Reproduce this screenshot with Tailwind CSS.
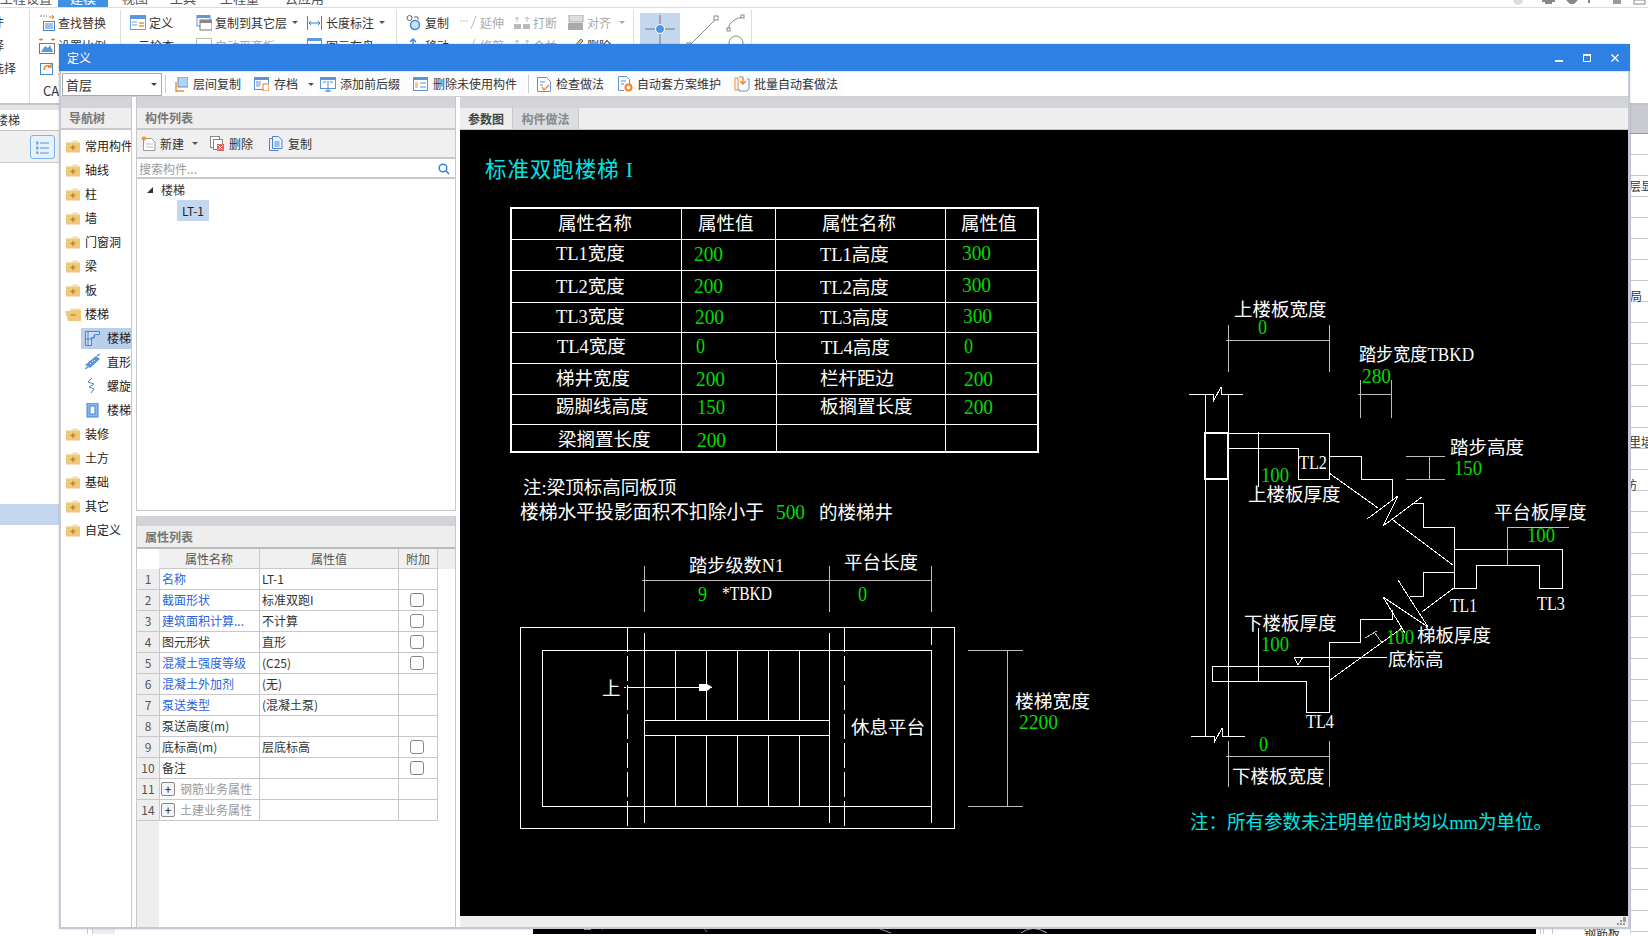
<!DOCTYPE html>
<html lang="zh">
<head>
<meta charset="UTF-8">
<title>定义</title>
<script src="https://cdn.jsdelivr.net/npm/@tailwindcss/browser@4"></script>
</head>
<body class="bg-white">
<svg width="0" height="0" class="absolute">
  <symbol id="folder" viewBox="0 0 14 14">
    <path d="M6 1.500h6v2H6z" fill="#f3dcae"/>
    <path d="M0 3.500h14v10H0z" fill="#efc878"/>
    <path d="M7 6v5M4.500 8.500h5" stroke="#b98a2e" stroke-width="1.400"/>
  </symbol>
  <symbol id="folder-open" viewBox="0 0 16 14">
    <path d="M5 1.500h10v2H5z" fill="#f3dcae"/>
    <path d="M0 4h5l1-1h10v11H3z" fill="#efc878"/>
    <path d="M5.500 8h5" stroke="#b98a2e" stroke-width="1.400"/>
  </symbol>
</svg>

<div class="relative w-[1648px] h-[936px] overflow-hidden bg-white text-[12px] leading-none text-[#333] font-['Noto_Sans_CJK_SC','Liberation_Sans',sans-serif]">

  <!-- 主窗口 菜单 -->
  <div class="h-[8px] flex items-end overflow-hidden border-b border-[#ddd] text-[13px] text-[#555]">
    <span class="w-[58px] shrink-0 h-[16px]">工程设置</span>
    <span class="w-[50px] shrink-0 h-[16px] bg-[#3f8fe4] text-white text-center">建模</span>
    <span class="ml-[14px] w-[48px] shrink-0 h-[16px]">视图</span>
    <span class="w-[50px] shrink-0 h-[16px]">工具</span>
    <span class="w-[65px] shrink-0 h-[16px]">工程量</span>
    <span class="h-[16px] shrink-0">云应用</span>
  </div>

  <!-- ribbon -->
  <div class="h-[97px] flex pt-[2px] border-b-2 border-[#c4c4c4] bg-white">
    <div class="w-[29px] shrink-0 flex flex-col overflow-hidden">
      <div class="h-[12px] mt-[6px] flex justify-end pr-[25px] whitespace-nowrap"><span>文件</span></div>
      <div class="h-[12px] mt-[11px] flex justify-end pr-[25px] whitespace-nowrap"><span>选择</span></div>
      <div class="h-[12px] mt-[11px] flex justify-end pr-[13px] whitespace-nowrap"><span>批量选择</span></div>
    </div>
    <div class="w-[91px] shrink-0 border-l border-[#ddd] pl-[9px] flex flex-col">
      <div class="h-[23px] mt-[1px] flex items-center gap-[3px] text-[12px]">
        <svg width="16" height="16" viewBox="0 0 16 16"><path d="M1 1h7" stroke="#888" stroke-dasharray="2 1"/><path d="M10 2h5M13 0l2 2-2 2" stroke="#e77b1e" fill="none"/><rect x="4.500" y="6.500" width="11" height="9" fill="none" stroke="#4a86cf"/><path d="M6 9h8M6 11h8M6 13h8" stroke="#4a86cf"/></svg>
        <span>查找替换</span>
      </div>
      <div class="h-[23px] flex items-center gap-[3px]">
        <svg width="16" height="16" viewBox="0 0 16 16"><path d="M2 0v3M0 1.500h4M14 0v3M12 1.500h4" stroke="#e77b1e"/><rect x=".5" y="5.500" width="15" height="10" fill="none" stroke="#777"/><path d="M2 14l4-6 3 2 2-3 3 7z" fill="#5d98dd"/></svg>
        <span>设置比例</span>
      </div>
      <div class="h-[23px] flex items-center gap-[3px]">
        <svg width="16" height="16" viewBox="0 0 16 16"><rect x="1.500" y="2.500" width="12" height="11" fill="none" stroke="#4a86cf"/><path d="M5 9a4 4 0 0 1 7-3M12 3v3H9" stroke="#e77b1e" fill="none" stroke-width="1.300"/></svg>
        <span>还原</span>
      </div>
      <div class="h-[20px] pl-[4px] flex items-center text-[13px]">CAD操作</div>
    </div>
    <div class="w-[276px] shrink-0 border-l border-[#ddd] pl-[9px] flex">
      <div class="flex flex-col w-[44px] shrink-0">
        <div class="h-[23px] mt-[1px] flex items-center gap-[3px]">
          <svg width="16" height="15" viewBox="0 0 16 15"><rect x=".5" y=".5" width="15" height="14" fill="#fff" stroke="#6b9fdc"/><rect x="0" y="0" width="16" height="4" fill="#5d98dd"/><path d="M2 7h5M2 10h5" stroke="#6b9fdc"/><path d="M9 7h5v2H9zM9 10h5v2H9z" fill="#f0b35c"/></svg>
          <span>定义</span>
        </div>
        <div class="h-[23px] flex items-center gap-[3px] whitespace-nowrap">
          <svg width="16" height="15" viewBox="0 0 16 15"><circle cx="7" cy="8" r="4" fill="none" stroke="#6b9fdc"/><path d="M10 11l3 3" stroke="#6b9fdc"/></svg>
          <span>云检查</span>
        </div>
      </div>
      <div class="flex flex-col w-[102px] ml-[22px] shrink-0">
        <div class="h-[23px] mt-[1px] flex items-center whitespace-nowrap">
          <svg width="16" height="16" viewBox="0 0 16 16" class="mr-[3px] shrink-0"><rect x="1" y="0" width="13" height="11" fill="#fff" stroke="#5d98dd"/><rect x="1" y="0" width="13" height="3" fill="#5d98dd"/><rect x="4" y="5" width="12" height="10" fill="#fff" stroke="#777"/><rect x="4" y="5" width="12" height="3" fill="#888"/></svg>
          <span>复制到其它层</span>
          <span class="ml-[5px] border-x-[3px] border-t-[3px] border-x-transparent border-t-[#555]"></span>
        </div>
        <div class="h-[23px] flex items-center gap-[3px] whitespace-nowrap text-[#aaa]">
          <svg width="16" height="15" viewBox="0 0 16 15"><rect x=".5" y=".5" width="15" height="13" fill="none" stroke="#bbb"/></svg>
          <span>自动平齐板</span>
        </div>
      </div>
      <div class="flex flex-col ml-[9px] shrink-0">
        <div class="h-[23px] mt-[1px] flex items-center whitespace-nowrap">
          <svg width="15" height="16" viewBox="0 0 15 16" class="mr-[4px] shrink-0"><path d="M.5 1v14M14.500 1v14" stroke="#777"/><path d="M2 8h11M4 6L2 8l2 2M11 6l2 2-2 2" stroke="#2f7fd6" fill="none"/></svg>
          <span>长度标注</span>
          <span class="ml-[5px] border-x-[3px] border-t-[3px] border-x-transparent border-t-[#555]"></span>
        </div>
        <div class="h-[23px] flex items-center gap-[4px] whitespace-nowrap">
          <svg width="15" height="15" viewBox="0 0 15 15"><rect x=".5" y=".5" width="14" height="12" fill="none" stroke="#5d98dd"/><rect x="0" y="0" width="15" height="3" fill="#5d98dd"/></svg>
          <span>图元存盘</span>
        </div>
      </div>
    </div>
    <div class="w-[237px] shrink-0 border-l border-[#ddd] pl-[9px] flex gap-[10px]">
      <div class="flex flex-col w-[44px] shrink-0">
        <div class="h-[23px] mt-[1px] flex items-center gap-[3px]">
          <svg width="16" height="16" viewBox="0 0 16 16"><circle cx="3.500" cy="3" r="2.500" fill="none" stroke="#666"/><circle cx="9" cy="10" r="4.500" fill="#cfe1f7" stroke="#3f86d8" stroke-width="1.500"/><path d="M8 2h4v3" stroke="#666" fill="none"/></svg>
          <span>复制</span>
        </div>
        <div class="h-[23px] flex items-center gap-[3px]">
          <svg width="16" height="15" viewBox="0 0 16 15"><path d="M7 1v9M4 4l3-3 3 3" stroke="#3f86d8" fill="none" stroke-width="1.400"/></svg>
          <span>移动</span>
        </div>
      </div>
      <div class="flex flex-col w-[44px] shrink-0 text-[#aaa]">
        <div class="h-[23px] mt-[1px] flex items-center gap-[2px] whitespace-nowrap">
          <svg width="18" height="14" viewBox="0 0 18 14"><path d="M0 5h8" stroke="#bbb" stroke-dasharray="2 1"/><path d="M16 0L11 13" stroke="#bbb"/></svg>
          <span>延伸</span>
        </div>
        <div class="h-[23px] flex items-center gap-[2px] whitespace-nowrap">
          <svg width="18" height="14" viewBox="0 0 18 14"><path d="M15 0L10 13" stroke="#bbb"/></svg>
          <span>修剪</span>
        </div>
      </div>
      <div class="flex flex-col w-[44px] shrink-0 text-[#aaa]">
        <div class="h-[23px] mt-[1px] flex items-center gap-[3px]">
          <svg width="16" height="14" viewBox="0 0 16 14"><path d="M0 8h7v5H0zM9 8h7v5H9z" fill="#bbb"/><path d="M3 1v5M13 1v5M1 3l2-2 2 2M11 3l2-2 2 2" stroke="#bbb" fill="none"/></svg>
          <span>打断</span>
        </div>
        <div class="h-[23px] flex items-center gap-[3px]">
          <svg width="16" height="14" viewBox="0 0 16 14"><path d="M3 1v5M13 1v5M1 3l2-2 2 2M11 3l2-2 2 2" stroke="#bbb" fill="none"/></svg>
          <span>合并</span>
        </div>
      </div>
      <div class="flex flex-col shrink-0">
        <div class="h-[23px] mt-[1px] flex items-center gap-[3px] text-[#aaa]">
          <svg width="16" height="15" viewBox="0 0 16 15"><path d="M1 0h14v7H1z" fill="#ddd" stroke="#aaa"/><path d="M0 8h15v7H0z" fill="#aaa"/></svg>
          <span>对齐</span>
          <span class="ml-[5px] border-x-[3px] border-t-[3px] border-x-transparent border-t-[#aaa]"></span>
        </div>
        <div class="h-[23px] flex items-center gap-[3px]">
          <svg width="16" height="15" viewBox="0 0 16 15"><path d="M13 1L4 11l-2 3 3-1 10-10z" fill="#e2c98d" stroke="#7c6a3c"/></svg>
          <span>删除</span>
        </div>
      </div>
    </div>
    <div class="w-[119px] shrink-0 border-x border-[#ddd] pl-[6px] flex gap-[6px]">
      <div class="w-[40px] h-[32px] mt-[3px] bg-[#c5d7ee]">
        <svg width="40" height="32" viewBox="0 0 40 32"><path d="M5 16h30M20 2v30" stroke="#777"/><circle cx="20" cy="16" r="4.500" fill="#4f97e6" stroke="#fff"/></svg>
      </div>
      <svg width="34" height="34" viewBox="0 0 34 34" class="mt-[4px]"><path d="M3 32L30 5" stroke="#888"/><rect x="1" y="29" width="4" height="4" fill="#fff" stroke="#888"/><rect x="28" y="2" width="4" height="4" fill="#fff" stroke="#888"/></svg>
      <svg width="22" height="34" viewBox="0 0 22 34" class="mt-[4px]"><path d="M2 15Q4 5 17 3" stroke="#888" fill="none"/><rect x="1" y="14" width="3" height="3" fill="#fff" stroke="#888"/><rect x="15" y="1" width="3" height="3" fill="#fff" stroke="#888"/><circle cx="10" cy="29" r="7" fill="none" stroke="#888"/></svg>
    </div>
    <div class="flex-1 relative">
      <svg width="140" height="6" viewBox="0 0 140 6" class="absolute right-0 -top-[10px]"><circle cx="10" cy="0" r="5" fill="#ddd"/><path d="M34 1h13M37 3h7" stroke="#888" stroke-width="2"/><path d="M58 0h12l-4 4h-4z" fill="#888"/><rect x="80" y="0" width="2" height="3" fill="#888"/><rect x="105" y="0" width="8" height="4" fill="#999"/><rect x="126" y="0" width="11" height="4" fill="none" stroke="#888"/></svg>
    </div>
  </div>

  <!-- 主窗口 主体 -->
  <div class="h-[829px] flex">
    <div class="w-[59px] shrink-0 flex flex-col">
      <div class="h-[5px] bg-[#e4e4e4]"></div>
      <div class="h-[21px] flex items-center justify-end overflow-hidden border-b border-[#c4c4c4] pr-[39px] whitespace-nowrap"><span>楼梯</span></div>
      <div class="h-[32px] bg-[#f0f0f0] border-b border-[#c8c8c8] pl-[30px] pt-[4px]">
        <div class="w-[25px] h-[24px] rounded-[3px] border border-[#7fb2e8] bg-[#e6f1fc] flex items-center justify-center">
          <svg width="13" height="13" viewBox="0 0 13 13"><path d="M0 1h2v2H0zM0 6h2v2H0zM0 11h2v2H0zM4 2h9M4 7h9M4 12h9" stroke="#5b94dc" fill="none"/></svg>
        </div>
      </div>
      <div class="h-[341px]"></div>
      <div class="h-[21px] bg-[#c5d7ee]"></div>
    </div>
    <div class="flex-1 relative flex flex-col justify-end">
      <div class="h-[7px] flex">
        <div class="w-[29px] border-r border-[#ccc]"></div>
        <div class="w-[5px] border-r border-[#ccc]"></div>
        <div class="w-[22px] bg-[#eee]"></div>
        <div class="w-[418px]"></div>
        <div class="w-[1003px] bg-black">
          <svg width="1003" height="7" viewBox="0 0 1003 7"><rect x="51" y="0" width="7" height="3" fill="#999"/><path d="M67 0l3 3" stroke="#c33"/><path d="M170 0l4 5" stroke="#777"/><path d="M342 0l16 6" stroke="#999"/><path d="M488 6q12-9 26 0" stroke="#aaa" fill="none"/></svg>
        </div>
        <div class="w-[4px]"></div>
        <div class="w-[3px] border-l border-[#ccc]"></div>
        <div class="w-[9px] border-l border-[#ccc]"></div>
        <div class="w-[10px] border-l border-[#ccc]"></div>
        <div class="pl-[22px] text-[12px] whitespace-nowrap h-[14px]">钢筋板</div>
      </div>
    </div>
    <div class="w-[18px] shrink-0 flex flex-col">
      <div class="h-[29px] bg-[#c8cbd0] border-b border-[#999]"></div>
      <div class="flex-1 relative overflow-hidden border-l border-[#ccd] bg-[repeating-linear-gradient(to_bottom,#fff_0,#fff_20px,#c8c8cc_20px,#c8c8cc_21px)] text-[12px] whitespace-nowrap">
        <span class="absolute -left-[2px] top-[46px]">层显</span>
        <span class="absolute -left-[1px] top-[156px]">局</span>
        <span class="absolute -left-[2px] top-[302px]">里墙</span>
        <span class="absolute -left-[6px] top-[345px]">防</span>
      </div>
    </div>
  </div>

  <!-- 定义 窗口 -->
  <div class="absolute left-[59px] top-[44px] w-[1571px] h-[885px] flex flex-col bg-white border-x-2 border-b-2 border-[#c5c9d6] border-t-0 shadow-[0_0_2px_rgba(0,0,0,0.2)]">
    <div class="-mx-[2px] h-[27px] shrink-0 bg-[#2e80e2] flex items-center pl-[8px] text-white text-[12px]">
      <span>定义</span>
      <div class="ml-auto flex items-center gap-[18px] pr-[10px]">
        <svg width="10" height="10" viewBox="0 0 10 10"><rect x="1" y="7" width="8" height="2" fill="#fff"/></svg>
        <svg width="10" height="10" viewBox="0 0 10 10"><path d="M1.500 1.500h7v7h-7z" fill="none" stroke="#fff"/><rect x="1" y="1" width="8" height="2" fill="#fff"/></svg>
        <svg width="10" height="10" viewBox="0 0 10 10"><path d="M1.500 1.500l7 7M8.500 1.500l-7 7" stroke="#fff" stroke-width="1.400"/></svg>
      </div>
    </div>

    <!-- 工具条 -->
    <div class="h-[26px] shrink-0 flex items-center pl-[1px] border-b border-t border-[#d0d0d4] border-t-[#e8e8ec] whitespace-nowrap">
      <div class="w-[100px] h-[23px] shrink-0 border border-[#aaa] flex items-center pl-[3px] text-[13px] relative">
        首层
        <span class="absolute right-[4px] top-[9px] border-x-[3px] border-t-[3px] border-x-transparent border-t-[#444]"></span>
      </div>
      <div class="w-px h-[18px] bg-[#ccc] ml-[3px] mr-[3px]"></div>
      <div class="w-[78px] h-[22px] shrink-0 flex items-center pl-[5px] gap-[5px] rounded-[2px] bg-[#fcfcfc]">
        <svg width="14" height="15" viewBox="0 0 14 15" class="shrink-0"><rect x="4" y="0" width="10" height="10" fill="#b3d2f5" stroke="#5b94dc"/><path d="M2 5v9h8" stroke="#ef8a2c" fill="none" stroke-width="1.400"/></svg>
        <span>层间复制</span>
      </div>
      <div class="w-[63px] ml-[3px] h-[22px] shrink-0 flex items-center pl-[4px] gap-[5px] rounded-[2px] bg-[#fcfcfc]">
        <svg width="15" height="14" viewBox="0 0 15 14" class="shrink-0"><rect x=".5" y=".5" width="14" height="12" fill="#fff" stroke="#5b94dc"/><rect x="0" y="0" width="15" height="3" fill="#5b94dc"/><path d="M2 5h5M2 7h5M2 9h4" stroke="#5b94dc"/><rect x="9" y="7" width="6" height="7" fill="#fff" stroke="#e77b1e"/></svg>
        <span>存档</span>
        <span class="ml-[5px] border-x-[3px] border-t-[3px] border-x-transparent border-t-[#555]"></span>
      </div>
      <div class="w-[91px] ml-[3px] h-[22px] shrink-0 flex items-center pl-[4px] gap-[4px] rounded-[2px] bg-[#fcfcfc]">
        <svg width="16" height="15" viewBox="0 0 16 15" class="shrink-0"><rect x=".5" y=".5" width="15" height="11" fill="#fff" stroke="#5b94dc"/><rect x="0" y="0" width="16" height="3" fill="#5b94dc"/><path d="M3 5h3M10 5h3M8 4v11M5 14h6" stroke="#4a86cf"/></svg>
        <span>添加前后缀</span>
      </div>
      <div class="w-[117px] ml-[2px] h-[22px] shrink-0 flex items-center pl-[4px] gap-[5px] rounded-[2px] bg-[#fcfcfc]">
        <svg width="15" height="14" viewBox="0 0 15 14" class="shrink-0"><rect x=".5" y=".5" width="14" height="13" fill="#fff" stroke="#5b94dc"/><rect x="0" y="0" width="15" height="3" fill="#5b94dc"/><path d="M2 6h3M2 8h3M2 10h3" stroke="#ef8a2c"/><path d="M7 6h6M7 10h6" stroke="#5b94dc"/></svg>
        <span>删除未使用构件</span>
      </div>
      <div class="w-px h-[18px] bg-[#ccc] ml-[2px] mr-[3px]"></div>
      <div class="w-[78px] h-[22px] shrink-0 flex items-center pl-[5px] gap-[5px] rounded-[2px] bg-[#fcfcfc]">
        <svg width="14" height="15" viewBox="0 0 14 15" class="shrink-0"><path d="M.5.5h9l4 4v10H.5z" fill="#fff" stroke="#5b94dc"/><path d="M3 5h5M3 8h3" stroke="#5b94dc"/><path d="M5 10l2 3 5-5" stroke="#ef8a2c" fill="none" stroke-width="1.400"/></svg>
        <span>检查做法</span>
      </div>
      <div class="w-[115px] ml-[3px] h-[22px] shrink-0 flex items-center pl-[5px] gap-[4px] rounded-[2px] bg-[#fcfcfc]">
        <svg width="15" height="16" viewBox="0 0 15 16" class="shrink-0"><path d="M.5.5h8l3 3v6M6 14.500H.5V.5" fill="#fff" stroke="#5b94dc"/><path d="M3 5h5M3 8h3" stroke="#5b94dc"/><circle cx="10.500" cy="11.500" r="3" fill="none" stroke="#ef8a2c" stroke-width="2"/></svg>
        <span>自动套方案维护</span>
      </div>
      <div class="w-[115px] ml-[2px] h-[22px] shrink-0 flex items-center pl-[4px] gap-[4px] rounded-[2px] bg-[#fcfcfc]">
        <svg width="16" height="16" viewBox="0 0 16 16" class="shrink-0"><path d="M1 2h3v12H1z" fill="none" stroke="#ef8a2c"/><path d="M5 1h4M13 3h2v10l-2 2H5V13" fill="none" stroke="#5b94dc"/><path d="M9 1v6M6 5l3 3 3-3" stroke="#ef8a2c" fill="none" stroke-width="1.400"/></svg>
        <span>批量自动套做法</span>
      </div>
    </div>

    <!-- 内容 -->
    <div class="flex-1 flex min-h-0">

      <!-- 导航树 -->
      <div class="w-[71px] shrink-0 flex flex-col border-r border-[#c8c8cc]">
        <div class="h-[11px] shrink-0 bg-[#d3d4d9]"></div>
        <div class="h-[22px] shrink-0 bg-[#eee] border-b-2 border-[#c8c8cc] flex items-center pl-[8px] text-[#777] font-bold">导航树</div>
        <div class="flex flex-col pt-[4px] overflow-hidden whitespace-nowrap text-[#222]">
          <div class="h-[24px] flex items-center pl-[5px] gap-[5px]"><svg width="14" height="14" class="shrink-0"><use href="#folder"/></svg><span>常用构件</span></div>
          <div class="h-[24px] flex items-center pl-[5px] gap-[5px]"><svg width="14" height="14"><use href="#folder"/></svg><span>轴线</span></div>
          <div class="h-[24px] flex items-center pl-[5px] gap-[5px]"><svg width="14" height="14"><use href="#folder"/></svg><span>柱</span></div>
          <div class="h-[24px] flex items-center pl-[5px] gap-[5px]"><svg width="14" height="14"><use href="#folder"/></svg><span>墙</span></div>
          <div class="h-[24px] flex items-center pl-[5px] gap-[5px]"><svg width="14" height="14"><use href="#folder"/></svg><span>门窗洞</span></div>
          <div class="h-[24px] flex items-center pl-[5px] gap-[5px]"><svg width="14" height="14"><use href="#folder"/></svg><span>梁</span></div>
          <div class="h-[24px] flex items-center pl-[5px] gap-[5px]"><svg width="14" height="14"><use href="#folder"/></svg><span>板</span></div>
          <div class="h-[24px] flex items-center pl-[4px] gap-[4px]"><svg width="16" height="14"><use href="#folder-open"/></svg><span>楼梯</span></div>
          <div class="h-[24px] flex items-center pl-[20px]">
            <div class="h-[21px] w-full flex items-center pl-[4px] gap-[7px] bg-[#b9cfec]">
              <svg width="15" height="15" viewBox="0 0 15 15" class="shrink-0"><path d="M.5.5h14v3h-5v3h-3v8h-6zM3 .5v14M.5 8H6M9 4v2M6 7h3" fill="#cfe0f5" stroke="#3f86d8"/></svg><span>楼梯</span>
            </div>
          </div>
          <div class="h-[24px] flex items-center pl-[24px] gap-[6px]"><svg width="16" height="16" viewBox="0 0 16 16" class="shrink-0"><path d="M0 11L11 2l4 3-10 9z" fill="#5b94dc"/><path d="M0 15l3-2M12 2l3-2" stroke="#5b94dc" stroke-width="1.500"/><path d="M5 9l1 1M7 7l1 1M9 6l1 1" stroke="#fff"/></svg><span>直形</span></div>
          <div class="h-[24px] flex items-center pl-[24px] gap-[6px]"><svg width="16" height="16" viewBox="0 0 16 16" class="shrink-0"><path d="M7 0L3 4l6 2-5 3 5 2-3 4" stroke="#4a86cf" fill="none"/></svg><span>螺旋</span></div>
          <div class="h-[24px] flex items-center pl-[25px] gap-[6px]"><svg width="15" height="15" viewBox="0 0 15 15" class="shrink-0"><rect x="1" y="0" width="11" height="14" fill="#8db8ea" stroke="#3f86d8"/><rect x="4" y="3" width="5" height="8" fill="#fff" stroke="#3f86d8"/></svg><span>楼梯</span></div>
          <div class="h-[24px] flex items-center pl-[5px] gap-[5px]"><svg width="14" height="14"><use href="#folder"/></svg><span>装修</span></div>
          <div class="h-[24px] flex items-center pl-[5px] gap-[5px]"><svg width="14" height="14"><use href="#folder"/></svg><span>土方</span></div>
          <div class="h-[24px] flex items-center pl-[5px] gap-[5px]"><svg width="14" height="14"><use href="#folder"/></svg><span>基础</span></div>
          <div class="h-[24px] flex items-center pl-[5px] gap-[5px]"><svg width="14" height="14"><use href="#folder"/></svg><span>其它</span></div>
          <div class="h-[24px] flex items-center pl-[5px] gap-[5px]"><svg width="14" height="14"><use href="#folder"/></svg><span>自定义</span></div>
        </div>
      </div>

      <div class="w-[4px] shrink-0"></div>

      <!-- 构件列表 + 属性列表 -->
      <div class="w-[320px] shrink-0 flex flex-col">
        <div class="h-[414px] shrink-0 flex flex-col border-x border-b border-[#c8c8cc]">
          <div class="h-[11px] shrink-0 bg-[#d3d4d9]"></div>
          <div class="h-[22px] shrink-0 bg-[#eee] border-b-2 border-[#c8c8cc] flex items-center pl-[8px] text-[#777] font-bold">构件列表</div>
          <div class="h-[29px] shrink-0 bg-[#f0f0f0] border-b-2 border-[#c8c8cc] flex items-center pl-[4px]">
            <svg width="15" height="15" viewBox="0 0 15 15"><path d="M2.500 2.500h8l3.500 3.500v8.500H2.500z" fill="#fff" stroke="#999"/><path d="M5 8h7M5 11h7" stroke="#bbb"/><path d="M3 0v5M.5 2.500h5M1 1l4 3M5 1L1 4" stroke="#f09422"/></svg>
            <span class="ml-[4px]">新建</span>
            <span class="ml-[8px] border-x-[3px] border-t-[3px] border-x-transparent border-t-[#555]"></span>
            <svg width="15" height="15" viewBox="0 0 15 15" class="ml-[12px]"><rect x=".5" y=".5" width="9" height="11" fill="#fff" stroke="#888"/><rect x="3.500" y="3.500" width="9" height="10" fill="#fff" stroke="#888"/><rect x="7" y="8" width="7" height="7" fill="#e0655a"/><path d="M8.500 9.500l4 4M12.500 9.500l-4 4" stroke="#fff"/></svg>
            <span class="ml-[4px]">删除</span>
            <svg width="14" height="15" viewBox="0 0 14 15" class="ml-[16px]"><path d="M.5 2.500h3M.5 2.500v12h9" fill="none" stroke="#4a86cf"/><path d="M3.500.5h6l3.500 3.500v8.500H3.500z" fill="#e9f2fc" stroke="#4a86cf"/><path d="M5.500 6h5M5.500 8h5M5.500 10h5" stroke="#4a86cf"/></svg>
            <span class="ml-[5px]">复制</span>
          </div>
          <div class="h-[20px] shrink-0 border-b-2 border-[#c8c8cc] flex items-center pl-[2px] pr-[5px] pt-[1px]">
            <span class="text-[#999]">搜索构件...</span>
            <svg width="12" height="12" viewBox="0 0 12 12" class="ml-auto"><circle cx="5" cy="5" r="3.800" fill="none" stroke="#2e80e2" stroke-width="1.400"/><path d="M8 8l3 3" stroke="#2e80e2" stroke-width="1.600"/></svg>
          </div>
          <div class="flex-1 pt-[1px] pl-[10px]">
            <div class="h-[20px] flex items-center">
              <span class="w-0 h-0 border-l-[6px] border-b-[6px] border-l-transparent border-b-[#333]"></span>
              <span class="ml-[8px]">楼梯</span>
            </div>
            <div class="ml-[30px] w-[32px] h-[21px] bg-[#c5d7ee] flex items-center justify-center text-[#222]">LT-1</div>
          </div>
        </div>

        <div class="h-[5px] shrink-0"></div>

        <div class="flex-1 min-h-0 flex flex-col border-x border-[#c8c8cc]">
          <div class="h-[10px] shrink-0 bg-[#d3d4d9]"></div>
          <div class="h-[23px] shrink-0 bg-[#eee] border-b-2 border-[#bbb] flex items-center pl-[8px] text-[#777] font-bold">属性列表</div>
          <div class="grid grid-cols-[22px_101px_139px_39px_1fr] h-[20px] shrink-0 text-[#555]">
            <div class="bg-white"></div>
            <div class="bg-[#f0f0f0] border-r border-b border-[#c8c8cc] flex items-center justify-center">属性名称</div>
            <div class="bg-[#f0f0f0] border-r border-b border-[#c8c8cc] flex items-center justify-center">属性值</div>
            <div class="bg-[#f0f0f0] border-r border-b border-[#c8c8cc] flex items-center justify-center">附加</div>
            <div class="bg-[#eee]"></div>
          </div>
          <div class="flex-1 bg-[linear-gradient(to_right,#eee_22px,#fff_22px)]">
            <div class="grid grid-cols-[22px_101px_139px_39px] h-[21px]"><div class="border-b border-[#c8c8cc] flex items-center justify-center text-[#555]">1</div><div class="border-x border-b border-[#c8c8cc] pl-[2px] flex items-center text-[#2b62e0]">名称</div><div class="border-r border-b border-[#c8c8cc] pl-[2px] flex items-center">LT-1</div><div class="border-r border-b border-[#c8c8cc]"></div></div>
            <div class="grid grid-cols-[22px_101px_139px_39px] h-[21px]"><div class="border-b border-[#c8c8cc] flex items-center justify-center text-[#555]">2</div><div class="border-x border-b border-[#c8c8cc] pl-[2px] flex items-center text-[#2b62e0]">截面形状</div><div class="border-r border-b border-[#c8c8cc] pl-[2px] flex items-center">标准双跑I</div><div class="border-r border-b border-[#c8c8cc] flex items-center pl-[11px]"><span class="w-[14px] h-[14px] rounded-[3px] border border-[#888]"></span></div></div>
            <div class="grid grid-cols-[22px_101px_139px_39px] h-[21px]"><div class="border-b border-[#c8c8cc] flex items-center justify-center text-[#555]">3</div><div class="border-x border-b border-[#c8c8cc] pl-[2px] flex items-center text-[#2b62e0]">建筑面积计算...</div><div class="border-r border-b border-[#c8c8cc] pl-[2px] flex items-center">不计算</div><div class="border-r border-b border-[#c8c8cc] flex items-center pl-[11px]"><span class="w-[14px] h-[14px] rounded-[3px] border border-[#888]"></span></div></div>
            <div class="grid grid-cols-[22px_101px_139px_39px] h-[21px]"><div class="border-b border-[#c8c8cc] flex items-center justify-center text-[#555]">4</div><div class="border-x border-b border-[#c8c8cc] pl-[2px] flex items-center">图元形状</div><div class="border-r border-b border-[#c8c8cc] pl-[2px] flex items-center">直形</div><div class="border-r border-b border-[#c8c8cc] flex items-center pl-[11px]"><span class="w-[14px] h-[14px] rounded-[3px] border border-[#888]"></span></div></div>
            <div class="grid grid-cols-[22px_101px_139px_39px] h-[21px]"><div class="border-b border-[#c8c8cc] flex items-center justify-center text-[#555]">5</div><div class="border-x border-b border-[#c8c8cc] pl-[2px] flex items-center text-[#2b62e0]">混凝土强度等级</div><div class="border-r border-b border-[#c8c8cc] pl-[2px] flex items-center">(C25)</div><div class="border-r border-b border-[#c8c8cc] flex items-center pl-[11px]"><span class="w-[14px] h-[14px] rounded-[3px] border border-[#888]"></span></div></div>
            <div class="grid grid-cols-[22px_101px_139px_39px] h-[21px]"><div class="border-b border-[#c8c8cc] flex items-center justify-center text-[#555]">6</div><div class="border-x border-b border-[#c8c8cc] pl-[2px] flex items-center text-[#2b62e0]">混凝土外加剂</div><div class="border-r border-b border-[#c8c8cc] pl-[2px] flex items-center">(无)</div><div class="border-r border-b border-[#c8c8cc]"></div></div>
            <div class="grid grid-cols-[22px_101px_139px_39px] h-[21px]"><div class="border-b border-[#c8c8cc] flex items-center justify-center text-[#555]">7</div><div class="border-x border-b border-[#c8c8cc] pl-[2px] flex items-center text-[#2b62e0]">泵送类型</div><div class="border-r border-b border-[#c8c8cc] pl-[2px] flex items-center">(混凝土泵)</div><div class="border-r border-b border-[#c8c8cc]"></div></div>
            <div class="grid grid-cols-[22px_101px_139px_39px] h-[21px]"><div class="border-b border-[#c8c8cc] flex items-center justify-center text-[#555]">8</div><div class="border-x border-b border-[#c8c8cc] pl-[2px] flex items-center">泵送高度(m)</div><div class="border-r border-b border-[#c8c8cc]"></div><div class="border-r border-b border-[#c8c8cc]"></div></div>
            <div class="grid grid-cols-[22px_101px_139px_39px] h-[21px]"><div class="border-b border-[#c8c8cc] flex items-center justify-center text-[#555]">9</div><div class="border-x border-b border-[#c8c8cc] pl-[2px] flex items-center">底标高(m)</div><div class="border-r border-b border-[#c8c8cc] pl-[2px] flex items-center">层底标高</div><div class="border-r border-b border-[#c8c8cc] flex items-center pl-[11px]"><span class="w-[14px] h-[14px] rounded-[3px] border border-[#888]"></span></div></div>
            <div class="grid grid-cols-[22px_101px_139px_39px] h-[21px]"><div class="border-b border-[#c8c8cc] flex items-center justify-center text-[#555]">10</div><div class="border-x border-b border-[#c8c8cc] pl-[2px] flex items-center">备注</div><div class="border-r border-b border-[#c8c8cc]"></div><div class="border-r border-b border-[#c8c8cc] flex items-center pl-[11px]"><span class="w-[14px] h-[14px] rounded-[3px] border border-[#888]"></span></div></div>
            <div class="grid grid-cols-[22px_101px_139px_39px] h-[21px]"><div class="border-b border-[#c8c8cc] flex items-center justify-center text-[#555]">11</div><div class="border-x border-b border-[#c8c8cc] pl-[1px] flex items-center text-[#999]"><span class="w-[14px] h-[14px] rounded-[2px] border border-[#888] bg-[#f5f5f5] flex items-center justify-center text-[#222] mr-[5px]">+</span>钢筋业务属性</div><div class="border-r border-b border-[#c8c8cc]"></div><div class="border-r border-b border-[#c8c8cc]"></div></div>
            <div class="grid grid-cols-[22px_101px_139px_39px] h-[21px]"><div class="border-b border-[#c8c8cc] flex items-center justify-center text-[#555]">14</div><div class="border-x border-b border-[#c8c8cc] pl-[1px] flex items-center text-[#999]"><span class="w-[14px] h-[14px] rounded-[2px] border border-[#888] bg-[#f5f5f5] flex items-center justify-center text-[#222] mr-[5px]">+</span>土建业务属性</div><div class="border-r border-b border-[#c8c8cc]"></div><div class="border-r border-b border-[#c8c8cc]"></div></div>
          </div>
        </div>
      </div>

      <div class="w-[4px] shrink-0"></div>

      <!-- 参数图 -->
      <div class="flex-1 min-w-0 flex flex-col">
        <div class="h-[11px] shrink-0 bg-[#d3d4d9]"></div>
        <div class="h-[22px] shrink-0 bg-[#eee] border-b border-[#c8c8cc] flex font-bold">
          <div class="w-[53px] flex items-center justify-center border-r border-[#c8c8cc] text-[#444]">参数图</div>
          <div class="w-[66px] flex items-center justify-center bg-[#dcdde0] border-r border-[#c8c8cc] text-[#888]">构件做法</div>
        </div>
        <div class="flex-1 bg-black overflow-hidden">
          <svg width="1169" height="787" viewBox="460 130 1169 787" class="block text-[18.5px] font-['Liberation_Serif','Noto_Sans_CJK_SC',serif]">
            <!-- 表格 -->
            <g stroke="#fff" fill="none" shape-rendering="crispEdges">
              <rect x="511" y="208" width="527" height="244" stroke-width="2"/>
              <path d="M511 239H1038M511 270H1038M511 302H1038M511 332H1038M511 363H1038M511 394H1038M511 424H1038"/>
              <path d="M681 208V452M775 208V360M776 360V452M945 208V452"/>
            </g>
            <!-- 平面图 -->
            <g stroke="#fff" fill="none" shape-rendering="crispEdges">
              <rect x="520" y="627" width="434" height="201"/>
              <rect x="542" y="650" width="389" height="156"/>
              <path d="M627 627V828M844 627V828" stroke-dasharray="25 4"/>
              <path d="M644 633V823M829 633V823M931 627V645M931 806V823"/>
              <path d="M675 650V720M706 650V720M737 650V720M768 650V720M799 650V720"/>
              <path d="M675 735V806M706 735V806M737 735V806M768 735V806M799 735V806"/>
              <path d="M644 720H829M644 735H829"/>
              <path d="M624 687H626M628 687H712"/>
            </g>
            <rect x="699" y="684" width="8" height="7" fill="#fff"/>
            <path d="M707 684l5 3-5 4z" fill="#fff"/>
            <!-- 标注 -->
            <g stroke="#bdbdbd" fill="none" shape-rendering="crispEdges">
              <path d="M644 566V612M829 566V612M931 566V612M642 580H931"/>
              <path d="M968 650H1023M968 806H1023M1007 650V806"/>
              <path d="M1228 325V372M1329 325V372M1226 340H1329"/>
              <path d="M1360 380V418M1391 380V418M1358 394H1391"/>
              <path d="M1406 456H1445M1406 479H1445M1429 456V479"/>
              <path d="M1507 527V565M1507 527H1569"/>
              <path d="M1228 741V787M1329 741V787M1226 756H1329"/>
              <path d="M1365 638L1377 631M1375 633L1382 643"/>
            </g>
            <!-- 剖面图 -->
            <g stroke="#fff" fill="none" shape-rendering="crispEdges">
              <path d="M1189 394H1213V402L1221 387V394H1243"/>
              <path d="M1205 394V736M1228 394V736"/>
              <rect x="1205" y="433" width="23" height="46" stroke-width="2"/>
              <path d="M1228 433H1329V456H1361V479H1392V500"/>
              <path d="M1228 448H1298V479H1329V433"/>
              <path d="M1329 473L1378 508"/>
              <path d="M1367 519L1398 496L1383 526L1422 497"/>
              <path d="M1393 520L1453 565"/>
              <path d="M1413 503H1423V527H1454V588"/>
              <path d="M1454 549H1562V588H1539V565H1476V588H1454"/>
              <path d="M1454 572H1423V596H1410"/>
              <path d="M1454 588L1422 612"/>
              <path d="M1398 580L1428 627L1383 597L1405 633"/>
              <path d="M1330 680L1402 628"/>
              <path d="M1392 610V619H1360V642H1329V712H1306V681H1212V666H1329V642"/>
              <path d="M1294 657H1387M1294 657L1298 665L1303 657"/>
              <path d="M1258 432V487M1258 628V682"/>
              <path d="M1191 736H1214V743L1222 728V736H1245"/>
            </g>
            <!-- 文字 -->
            <g fill="#00e6e6">
              <text x="485" y="177" class="text-[21.5px]" textLength="148" lengthAdjust="spacing">标准双跑楼梯 I</text>
              <text x="1190" y="829" class="text-[19px]" textLength="362" lengthAdjust="spacingAndGlyphs">注：所有参数未注明单位时均以mm为单位。</text>
            </g>
            <g fill="#fff">
              <text x="558" y="230">属性名称</text>
              <text x="698" y="230">属性值</text>
              <text x="822" y="230">属性名称</text>
              <text x="961" y="230">属性值</text>
              <text x="556" y="260">TL1宽度</text>
              <text x="820" y="261">TL1高度</text>
              <text x="556" y="293">TL2宽度</text>
              <text x="820" y="294">TL2高度</text>
              <text x="556" y="323">TL3宽度</text>
              <text x="820" y="324">TL3高度</text>
              <text x="557" y="353">TL4宽度</text>
              <text x="821" y="354">TL4高度</text>
              <text x="556" y="385">梯井宽度</text>
              <text x="820" y="385">栏杆距边</text>
              <text x="556" y="413">踢脚线高度</text>
              <text x="820" y="413">板搁置长度</text>
              <text x="558" y="446">梁搁置长度</text>
              <text x="523" y="494">注:梁顶标高同板顶</text>
              <text x="520" y="519" class="text-[18.8px]">楼梯水平投影面积不扣除小于</text>
              <text x="819" y="519">的楼梯井</text>
              <text x="689" y="572" textLength="95" lengthAdjust="spacingAndGlyphs">踏步级数N1</text>
              <text x="844" y="569">平台长度</text>
              <text x="722" y="600" textLength="50" lengthAdjust="spacingAndGlyphs">*TBKD</text>
              <text x="602" y="695">上</text>
              <text x="851" y="734">休息平台</text>
              <text x="1015" y="708" textLength="75" lengthAdjust="spacingAndGlyphs">楼梯宽度</text>
              <text x="1234" y="316">上楼板宽度</text>
              <text x="1359" y="361" textLength="115" lengthAdjust="spacingAndGlyphs">踏步宽度TBKD</text>
              <text x="1450" y="454">踏步高度</text>
              <text x="1248" y="501">上楼板厚度</text>
              <text x="1494" y="519">平台板厚度</text>
              <text x="1299" y="469" textLength="28" lengthAdjust="spacingAndGlyphs">TL2</text>
              <text x="1450" y="612" textLength="27" lengthAdjust="spacingAndGlyphs">TL1</text>
              <text x="1537" y="610" textLength="28" lengthAdjust="spacingAndGlyphs">TL3</text>
              <text x="1306" y="728" textLength="28" lengthAdjust="spacingAndGlyphs">TL4</text>
              <text x="1244" y="630">下楼板厚度</text>
              <text x="1417" y="642">梯板厚度</text>
              <text x="1388" y="666">底标高</text>
              <text x="1232" y="783">下楼板宽度</text>
            </g>
            <g fill="#00dc00" class="text-[21px]">
              <text x="694" y="261" textLength="29" lengthAdjust="spacingAndGlyphs">200</text>
              <text x="962" y="260" textLength="29" lengthAdjust="spacingAndGlyphs">300</text>
              <text x="694" y="293" textLength="29" lengthAdjust="spacingAndGlyphs">200</text>
              <text x="962" y="292" textLength="29" lengthAdjust="spacingAndGlyphs">300</text>
              <text x="695" y="324" textLength="29" lengthAdjust="spacingAndGlyphs">200</text>
              <text x="963" y="323" textLength="29" lengthAdjust="spacingAndGlyphs">300</text>
              <text x="696" y="353" textLength="9" lengthAdjust="spacingAndGlyphs">0</text>
              <text x="964" y="353" textLength="9" lengthAdjust="spacingAndGlyphs">0</text>
              <text x="696" y="386" textLength="29" lengthAdjust="spacingAndGlyphs">200</text>
              <text x="964" y="386" textLength="29" lengthAdjust="spacingAndGlyphs">200</text>
              <text x="697" y="414" textLength="28" lengthAdjust="spacingAndGlyphs">150</text>
              <text x="964" y="414" textLength="29" lengthAdjust="spacingAndGlyphs">200</text>
              <text x="697" y="447" textLength="29" lengthAdjust="spacingAndGlyphs">200</text>
              <text x="776" y="519" textLength="29" lengthAdjust="spacingAndGlyphs">500</text>
              <text x="698" y="601" textLength="9" lengthAdjust="spacingAndGlyphs">9</text>
              <text x="858" y="601" textLength="9" lengthAdjust="spacingAndGlyphs">0</text>
              <text x="1019" y="729" textLength="39" lengthAdjust="spacingAndGlyphs">2200</text>
              <text x="1258" y="334" textLength="9" lengthAdjust="spacingAndGlyphs">0</text>
              <text x="1362" y="383" textLength="29" lengthAdjust="spacingAndGlyphs">280</text>
              <text x="1454" y="475" textLength="28" lengthAdjust="spacingAndGlyphs">150</text>
              <text x="1261" y="482" textLength="28" lengthAdjust="spacingAndGlyphs">100</text>
              <text x="1527" y="542" textLength="28" lengthAdjust="spacingAndGlyphs">100</text>
              <text x="1261" y="651" textLength="28" lengthAdjust="spacingAndGlyphs">100</text>
              <text x="1386" y="644" textLength="28" lengthAdjust="spacingAndGlyphs">100</text>
              <text x="1259" y="751" textLength="9" lengthAdjust="spacingAndGlyphs">0</text>
            </g>
          </svg>
        </div>
        <div class="h-[11px] shrink-0 bg-[#eee] flex justify-end items-end pr-[2px] pb-[1px]">
          <svg width="9" height="9" viewBox="0 0 9 9"><path d="M6 0h3v3H6zM3 3h2v2H3zM6 3h3v2H6zM0 6h2v2H0zM3 6h2v2H3zM6 6h2v2H6z" fill="#999"/></svg>
        </div>
      </div>
    </div>
  </div>
</div>
</body>
</html>
